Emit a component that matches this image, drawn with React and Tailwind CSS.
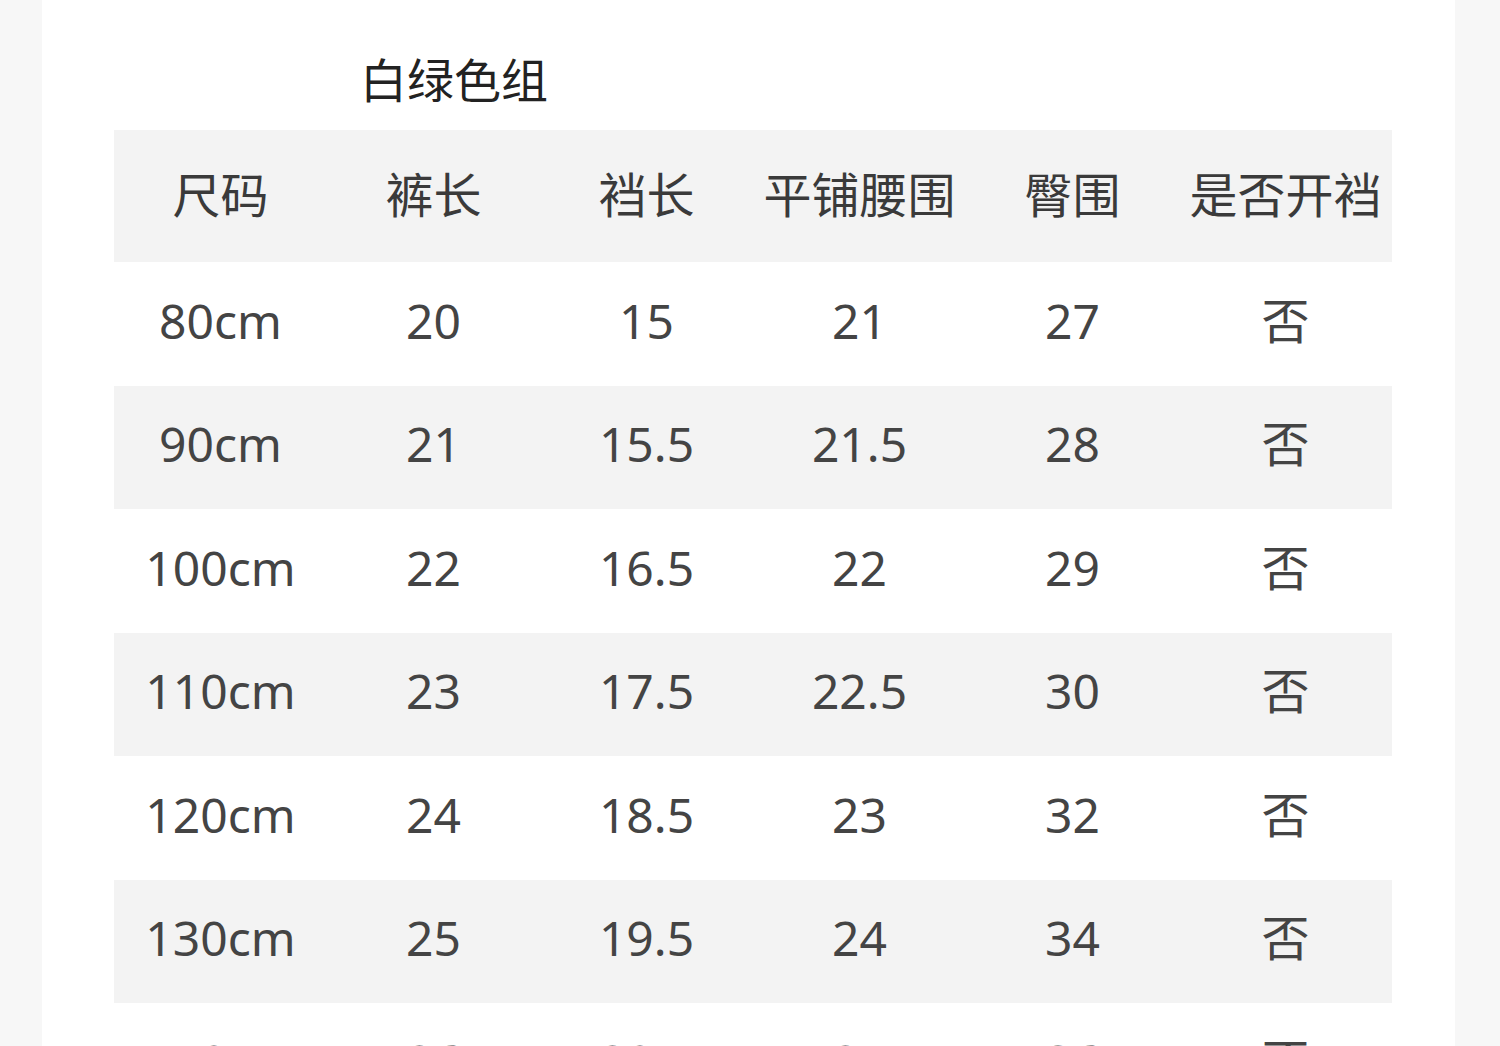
import React from "react";

const headers = ["尺码", "裤长", "裆长", "平铺腰围", "臀围", "是否开裆"];

const rows = [
  ["80cm", "20", "15", "21", "27", "否"],
  ["90cm", "21", "15.5", "21.5", "28", "否"],
  ["100cm", "22", "16.5", "22", "29", "否"],
  ["110cm", "23", "17.5", "22.5", "30", "否"],
  ["120cm", "24", "18.5", "23", "32", "否"],
  ["130cm", "25", "19.5", "24", "34", "否"],
  ["140cm", "26", "20.5", "25", "36", "否"],
];

const font = {
  fontFamily: '"Noto Sans", "Noto Sans CJK SC", sans-serif',
};

const App = () => {
  return (
    <div className="min-h-screen bg-[#f7f7f7] overflow-hidden" style={font}>
      <div className="ml-[42px] w-[1413px] min-h-screen bg-white">
        <div className="pt-[52px] pl-[318px] mb-[22px] text-[47px] leading-[56px] text-[#222]">
          白绿色组
        </div>

        <div className="ml-[72px] w-[1278px]">
          <div className="grid grid-cols-6 h-[132px] items-center bg-[#f3f3f3] text-[48px] text-[#3a3a3a]">
            {headers.map((h) => (
              <div key={h} className="text-center pb-[2px]">
                {h}
              </div>
            ))}
          </div>

          {rows.map((r, i) => (
            <div
              key={r[0]}
              className={`grid grid-cols-6 h-[123.5px] items-center text-[48px] text-[#444] ${
                i % 2 === 1 ? "bg-[#f3f3f3]" : "bg-white"
              }`}
            >
              {r.map((c, j) => (
                <div key={j} className="text-center pb-[6px]">
                  {c}
                </div>
              ))}
            </div>
          ))}
        </div>
      </div>
    </div>
  );
};

export default App;
